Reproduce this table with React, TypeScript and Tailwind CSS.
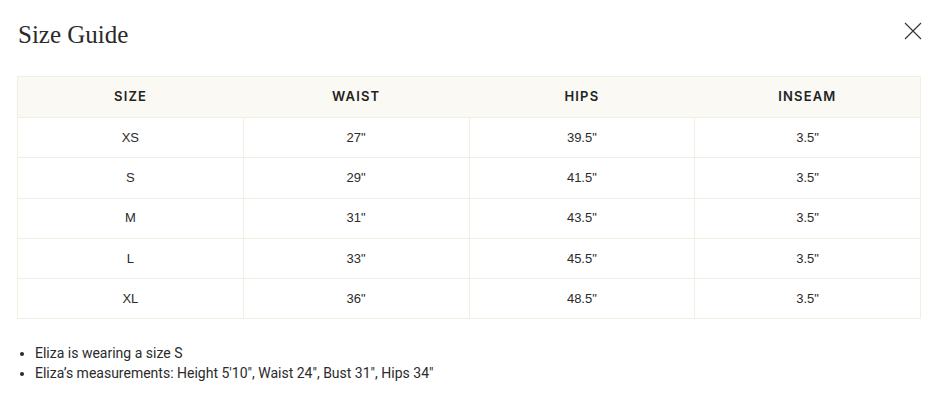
const rows = [
  { size: "XS", waist: '27"', hips: '39.5"', inseam: '3.5"' },
  { size: "S", waist: '29"', hips: '41.5"', inseam: '3.5"' },
  { size: "M", waist: '31"', hips: '43.5"', inseam: '3.5"' },
  { size: "L", waist: '33"', hips: '45.5"', inseam: '3.5"' },
  { size: "XL", waist: '36"', hips: '48.5"', inseam: '3.5"' },
];

const headers = ["SIZE", "WAIST", "HIPS", "INSEAM"];

export default function App() {
  return (
    <div className="w-[932px] h-[408px] bg-white pl-[17px] pr-[10px] pt-[20px] text-[#2b2b2b]">
      <div className="flex items-start justify-between">
        <h1 className="text-[25px] leading-[30px] font-['Liberation_Serif',serif] text-[#2a2a2a] ml-px">Size Guide</h1>
        <button className="mt-[2px] text-[#333]" aria-label="Close">
          <svg width="18" height="18" viewBox="0 0 18 18" fill="none" stroke="currentColor" strokeWidth="1.1">
            <path d="M1 1 L17 17 M17 1 L1 17" />
          </svg>
        </button>
      </div>

      <table className="mt-[26px] w-[904px] table-fixed border-collapse border border-[#f1eee2] font-['Liberation_Sans',Arial,sans-serif] text-[13px]">
        <thead>
          <tr className="bg-[#faf9f4] h-[41px]">
            {headers.map(h => (
              <th key={h} className="font-['Inter',sans-serif] font-semibold text-[13px] tracking-[0.09em] text-[#222]">{h}</th>
            ))}
          </tr>
        </thead>
        <tbody>
          {rows.map(r => (
            <tr key={r.size} className="h-[40.3px]">
              <td className="border border-[#f1eee2] text-center">{r.size}</td>
              <td className="border border-[#f1eee2] text-center">{r.waist}</td>
              <td className="border border-[#f1eee2] text-center">{r.hips}</td>
              <td className="border border-[#f1eee2] text-center">{r.inseam}</td>
            </tr>
          ))}
        </tbody>
      </table>

      <ul className="mt-[24px] list-disc pl-[18px] font-['Roboto',sans-serif] text-[14px] leading-[20px] text-[#2b2b2b]">
        <li>Eliza is wearing a size S</li>
        <li>Eliza’s measurements: Height 5'10", Waist 24", Bust 31", Hips 34"</li>
      </ul>
    </div>
  );
}
